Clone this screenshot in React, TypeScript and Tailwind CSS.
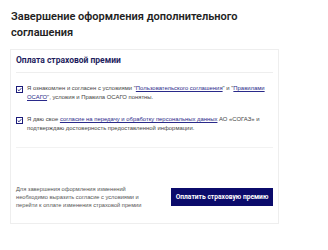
import React from 'react';

const Check = () => (
  <span className="mt-[1.5px] flex h-[7px] w-[7px] shrink-0 items-center justify-center border border-[#1b1b7a] bg-white">
    <svg width="5" height="5" viewBox="0 0 10 10" fill="none">
      <path d="M1.5 5.2 L4 7.6 L8.6 2.4" stroke="#1b1b7a" strokeWidth="1.8" />
    </svg>
  </span>
);

const App = () => {
  return (
    <div className="w-[328px] h-[250px] bg-white font-['Roboto','Liberation_Sans',sans-serif] overflow-hidden">
      <div className="pl-[11px] pt-[9px]">
        <h1 className="text-[11px] font-semibold leading-[16px] text-[#222]">
          Завершение оформления дополнительного
          <br />
          соглашения
        </h1>
      </div>

      <div className="ml-[10px] mt-[8px] w-[269px] h-[175px] border border-[#eeeeee] bg-white">
        <div className="mx-[5px] pt-[4px]">
          <strong className="block text-[8.5px] leading-[12px] font-bold text-[#1e1e5e]">Оплата страховой премии</strong>
          <div className="mt-[6px] h-px bg-[#eeeeee]" />

          <div className="mt-[11px] flex gap-[4px] font-['Liberation_Sans',sans-serif] text-[5.9px] leading-[9px] text-[#444]">
            <Check />
            <p>
              Я ознакомлен и согласен с условиями "
              <span className="text-[#2a2a8a] underline">Пользовательского соглашения</span>" и "
              <span className="text-[#2a2a8a] underline">Правилами ОСАГО</span>", условия и Правила ОСАГО понятны.
            </p>
          </div>

          <div className="mt-[13px] flex gap-[4px] font-['Liberation_Sans',sans-serif] text-[5.9px] leading-[9px] text-[#444]">
            <Check />
            <p>
              Я даю свое{' '}
              <span className="text-[#2a2a8a] underline">согласие на передачу и обработку персональных данных</span> АО
              «СОГАЗ» и подтверждаю достоверность предоставленной информации.
            </p>
          </div>

          <div className="mt-[14px] h-px bg-[#f2f2f2]" />

          <div className="mt-[37px] flex items-center justify-between">
            <p className="font-['Liberation_Sans',sans-serif] text-[5.7px] leading-[8px] text-[#555]">
              Для завершения оформления изменений
              <br />
              необходимо выразить согласие с условиями и
              <br />
              перейти к оплате изменения страховой премии
            </p>
            <button className="flex h-[18px] w-[102px] items-center justify-center bg-[#0b0b6b] text-[6.7px] font-bold text-white">
              Оплатить страховую премию
            </button>
          </div>
        </div>
      </div>
    </div>
  );
};

export default App;
